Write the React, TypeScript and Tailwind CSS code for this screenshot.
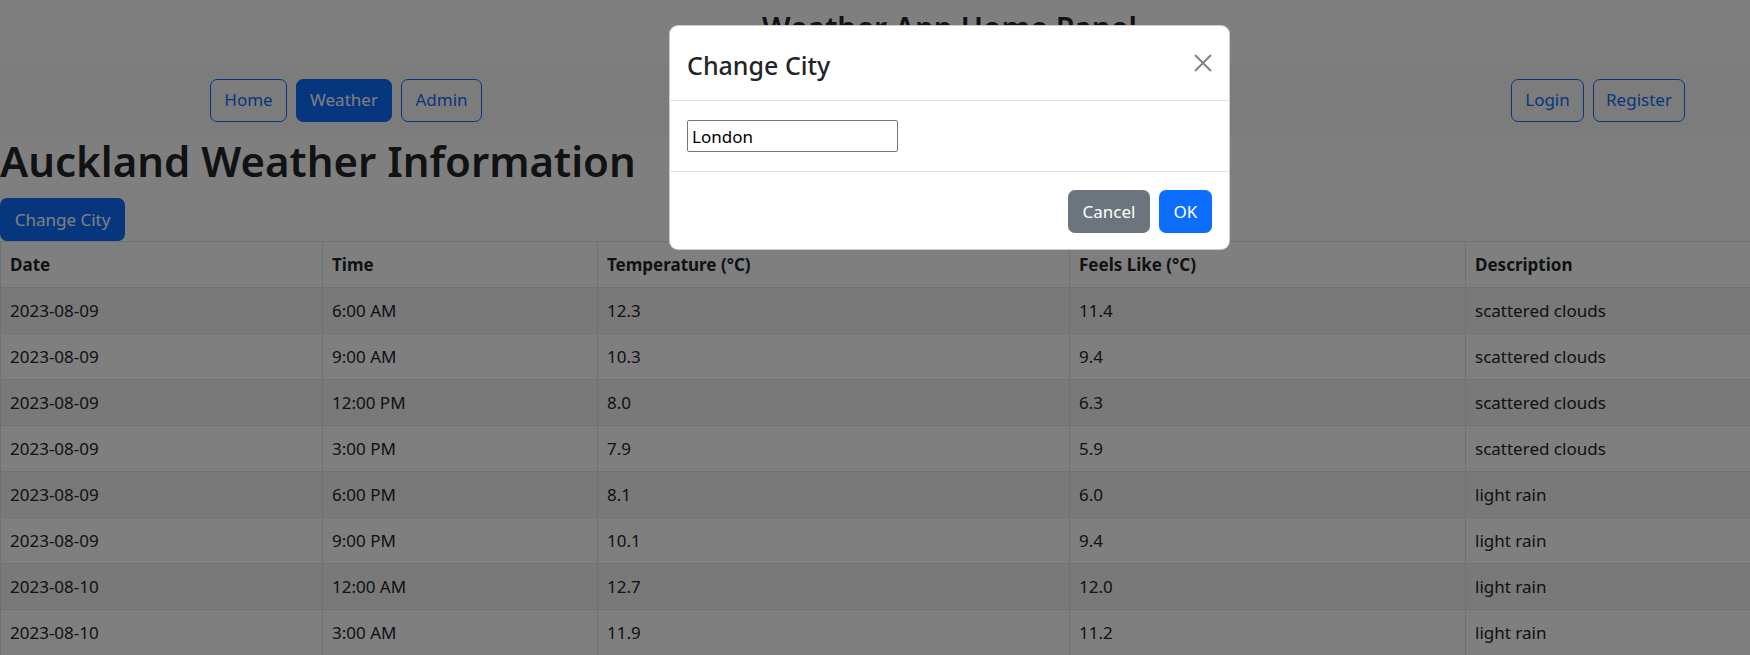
import React from "react";

const forecast = [
  { date: "2023-08-09", time: "6:00 AM", temp: "12.3", feels: "11.4", desc: "scattered clouds" },
  { date: "2023-08-09", time: "9:00 AM", temp: "10.3", feels: "9.4", desc: "scattered clouds" },
  { date: "2023-08-09", time: "12:00 PM", temp: "8.0", feels: "6.3", desc: "scattered clouds" },
  { date: "2023-08-09", time: "3:00 PM", temp: "7.9", feels: "5.9", desc: "scattered clouds" },
  { date: "2023-08-09", time: "6:00 PM", temp: "8.1", feels: "6.0", desc: "light rain" },
  { date: "2023-08-09", time: "9:00 PM", temp: "10.1", feels: "9.4", desc: "light rain" },
  { date: "2023-08-10", time: "12:00 AM", temp: "12.7", feels: "12.0", desc: "light rain" },
  { date: "2023-08-10", time: "3:00 AM", temp: "11.9", feels: "11.2", desc: "light rain" },
];

const cell = "h-[46px] border border-[#dee2e6] px-[9px] text-left align-middle";

function OutlineButton({ children, className }: { children: React.ReactNode; className: string }) {
  return (
    <button
      className={`h-[43px] rounded-[7px] border border-[#0d6efd] text-[17px] text-[#0d6efd] ${className}`}
    >
      {children}
    </button>
  );
}

export default function App() {
  return (
    <div className="h-screen w-screen overflow-hidden bg-white font-['Noto_Sans',sans-serif] text-[#212529]">
      {/* page is wider than the viewport; the right side is cut off */}
      <div className="relative w-[1899px]">
        <header className="flex h-[65px] justify-center pt-[10px]">
          <h1 className="text-[30px] font-semibold leading-[36px]">Weather App Home Panel</h1>
        </header>

        <nav className="flex h-[70px] items-center justify-between bg-[#f8f9fa] pl-[210px] pr-[214px]">
          <div className="flex gap-[9px]">
            <OutlineButton className="w-[77px]">Home</OutlineButton>
            <button className="h-[43px] w-[96px] rounded-[7px] border border-[#0d6efd] bg-[#0d6efd] text-[17px] text-white">
              Weather
            </button>
            <OutlineButton className="w-[81px]">Admin</OutlineButton>
          </div>
          <div className="flex gap-[9px]">
            <OutlineButton className="w-[73px]">Login</OutlineButton>
            <OutlineButton className="w-[92px]">Register</OutlineButton>
          </div>
        </nav>

        <main>
          <h2 className="mb-[11px] text-[42px] font-semibold leading-[52px]">Auckland Weather Information</h2>
          <button className="h-[43px] w-[125px] rounded-[7px] bg-[#0d6efd] text-[17px] text-white">
            Change City
          </button>
          <table className="w-full table-fixed border-collapse text-[17px]">
            <colgroup>
              <col className="w-[322px]" />
              <col className="w-[275px]" />
              <col className="w-[472px]" />
              <col className="w-[396px]" />
              <col />
            </colgroup>
            <thead>
              <tr className="font-bold">
                <th className={cell}>Date</th>
                <th className={cell}>Time</th>
                <th className={cell}>Temperature (°C)</th>
                <th className={cell}>Feels Like (°C)</th>
                <th className={cell}>Description</th>
              </tr>
            </thead>
            <tbody>
              {forecast.map((row, i) => (
                <tr key={i} className="odd:bg-[#f2f2f2]">
                  <td className={cell}>{row.date}</td>
                  <td className={cell}>{row.time}</td>
                  <td className={cell}>{row.temp}</td>
                  <td className={cell}>{row.feels}</td>
                  <td className={cell}>{row.desc}</td>
                </tr>
              ))}
            </tbody>
          </table>
        </main>

        {/* modal backdrop */}
        <div className="absolute inset-0 bg-black/50" />

        <div className="absolute inset-x-0 top-0 flex justify-center pt-[25px]">
          <div className="w-[561px] rounded-[9px] border border-black/20 bg-white">
            <div className="flex h-[75px] items-center justify-between border-b border-[#dee2e6] pl-[17px] pr-[17px]">
              <h5 className="pt-[3px] text-[25px] font-medium leading-[1.2]">Change City</h5>
              <button className="flex h-[18px] w-[18px] items-center justify-center">
                <svg width="18" height="18" viewBox="0 0 18 18">
                  <path d="M1 1L17 17M17 1L1 17" stroke="#000" strokeOpacity="0.5" strokeWidth="1.8" />
                </svg>
              </button>
            </div>
            <div className="px-[17px] py-[19px]">
              <input
                defaultValue="London"
                className="h-[32px] w-[211px] rounded-[2px] border border-[#767676] px-[4px] text-[17px] text-black outline-none"
              />
            </div>
            <div className="flex justify-end gap-[9px] border-t border-[#dee2e6] pb-[16px] pl-[17px] pr-[17px] pt-[18px]">
              <button className="h-[43px] w-[82px] rounded-[7px] bg-[#6c757d] text-[17px] text-white">Cancel</button>
              <button className="h-[43px] w-[53px] rounded-[7px] bg-[#0d6efd] text-[17px] text-white">OK</button>
            </div>
          </div>
        </div>
      </div>
    </div>
  );
}
